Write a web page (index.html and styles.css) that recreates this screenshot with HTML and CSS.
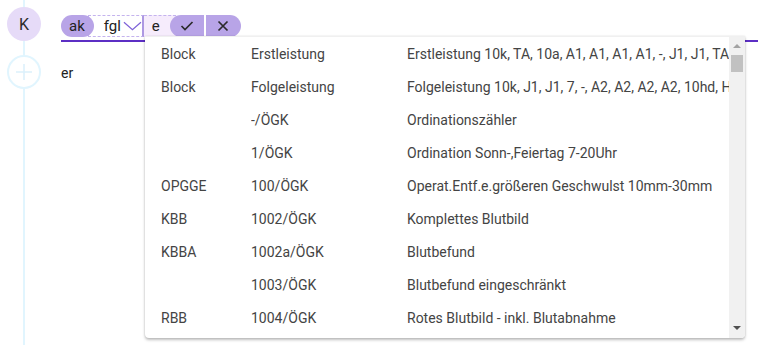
FILE: index.html
```html
<!DOCTYPE html>
<html lang="en">
<head>
  <meta charset="UTF-8">
  <meta name="viewport" content="width=device-width, initial-scale=1.0">
  <title>Leistungen</title>
  <link rel="stylesheet" href="styles.css">
</head>
<body>
  <div class="page">
    <div class="rail">
      <div class="rail-line top"></div>
      <div class="avatar">K</div>
      <div class="rail-line mid"></div>
      <div class="add">
        <svg width="18" height="18" viewBox="0 0 18 18"><path d="M9 1v16M1 9h16" stroke="#dcf1fc" stroke-width="1.6" fill="none"/></svg>
      </div>
      <div class="rail-line rest"></div>
    </div>

    <div class="main">
      <div class="field">
        <div class="chips">
          <span class="chip">ak</span>
          <span class="draft">
            <span class="draft-text">fgl</span>
            <svg class="chevron" width="20" height="10" viewBox="0 0 20 10"><polyline points="1,1 10,9 19,1" fill="none" stroke="#7d62d8" stroke-width="1.3"/></svg>
          </span>
          <span class="input">e</span>
          <button class="act ok">
            <svg width="14" height="12" viewBox="0 0 14 12"><polyline points="1.5,6 5,9.5 12.5,2" fill="none" stroke="#2b2b2b" stroke-width="1.7"/></svg>
          </button>
          <button class="act cancel">
            <svg width="12" height="12" viewBox="0 0 12 12"><path d="M1.5 1.5l9 9M10.5 1.5l-9 9" stroke="#2b2b2b" stroke-width="1.7" fill="none"/></svg>
          </button>
        </div>
      </div>
      <div class="note">er</div>
    </div>
  </div>

  <div class="dropdown">
    <div class="list">
      <div class="row"><span>Block</span><span>Erstleistung</span><span>Erstleistung 10k, TA, 10a, A1, A1, A1, A1, -, J1, J1, TA</span></div>
      <div class="row"><span>Block</span><span>Folgeleistung</span><span>Folgeleistung 10k, J1, J1, 7, -, A2, A2, A2, A2, 10hd, H</span></div>
      <div class="row"><span></span><span>-/ÖGK</span><span>Ordinationszähler</span></div>
      <div class="row"><span></span><span>1/ÖGK</span><span>Ordination Sonn-,Feiertag 7-20Uhr</span></div>
      <div class="row"><span>OPGGE</span><span>100/ÖGK</span><span>Operat.Entf.e.größeren Geschwulst 10mm-30mm</span></div>
      <div class="row"><span>KBB</span><span>1002/ÖGK</span><span>Komplettes Blutbild</span></div>
      <div class="row"><span>KBBA</span><span>1002a/ÖGK</span><span>Blutbefund</span></div>
      <div class="row"><span></span><span>1003/ÖGK</span><span>Blutbefund eingeschränkt</span></div>
      <div class="row"><span>RBB</span><span>1004/ÖGK</span><span>Rotes Blutbild - inkl. Blutabnahme</span></div>
    </div>
    <div class="scrollbar">
      <div class="arrow up"></div>
      <div class="thumb"></div>
      <div class="track"></div>
      <div class="arrow down"></div>
    </div>
  </div>
</body>
</html>
```

FILE: styles.css
```css
* { box-sizing: border-box; margin: 0; padding: 0; }
body {
  font-family: Roboto, "Noto Sans", sans-serif;
  font-size: 14px;
  color: #333;
  background: #fff;
  width: 758px;
  height: 345px;
  overflow: hidden;
  position: relative;
}
.page {
  display: flex;
  height: 345px;
}
.rail {
  width: 48px;
  display: flex;
  flex-direction: column;
  align-items: center;
}
.rail-line {
  width: 2px;
  background: #e1f5fe;
}
.rail-line.top { height: 7px; }
.rail-line.mid { height: 14px; }
.rail-line.rest { flex: 1; }
.avatar {
  width: 34px;
  height: 34px;
  border-radius: 50%;
  background: #e6dbf8;
  display: flex;
  align-items: center;
  justify-content: center;
  font-size: 16px;
  color: #2d2d2d;
}
.add {
  width: 34px;
  height: 34px;
  border-radius: 50%;
  border: 2px solid #e1f5fe;
  display: flex;
  align-items: center;
  justify-content: center;
}
.main {
  flex: 1;
  padding-left: 13px;
}
.field {
  padding-top: 15px;
  height: 42px;
  border-bottom: 2px solid #5c2fc4;
}
.chips {
  display: flex;
  height: 22px;
  align-items: stretch;
}
.chip {
  background: #b8a4e7;
  border-radius: 11px;
  padding: 0 9px 0 8px;
  display: flex;
  align-items: center;
  font-size: 15px;
  color: #222;
  position: relative;
  z-index: 1;
}
.draft {
  margin-left: -6px;
  width: 56px;
  border: 1px dashed #c4b3ee;
  border-right: 2px solid #ad98e2;
  display: flex;
  align-items: center;
  padding-left: 15px;
  font-size: 15px;
  color: #222;
}
.draft-text { margin-right: 2px; }
.chevron { margin-top: -1px; }
.input {
  width: 32px;
  background: #f6ecfc;
  border-top: 1px dashed #c4b3ee;
  border-bottom: 1px dashed #ede2f9;
  display: flex;
  align-items: center;
  padding-left: 8px;
  font-size: 15px;
  color: #222;
  margin-right: -6px;
}
.act {
  border: none;
  background: #b8a4e7;
  height: 22px;
  display: flex;
  align-items: center;
  justify-content: center;
  position: relative;
}
.act.ok {
  width: 34px;
  border-radius: 11px 0 0 11px;
  margin-right: 2px;
}
.act.cancel {
  width: 35px;
  border-radius: 0 11px 11px 0;
}
.note {
  margin-top: 21px;
  line-height: 20px;
  font-size: 14px;
  color: #222;
}
.dropdown {
  position: absolute;
  left: 145px;
  top: 36px;
  width: 600px;
  height: 302px;
  background: #fff;
  border-top: 1px solid #f0f0f0;
  border-radius: 0 0 4px 4px;
  box-shadow: 0 2px 3px rgba(0,0,0,0.25), 0 0 2px rgba(0,0,0,0.12);
  display: flex;
  overflow: hidden;
}
.list {
  flex: 1;
  overflow: hidden;
}
.row {
  display: grid;
  grid-template-columns: 90px 156px 1fr;
  height: 33px;
  align-items: center;
  padding-left: 16px;
  white-space: nowrap;
  color: #444;
  font-size: 14px;
}
.row span { overflow: hidden; }
.scrollbar {
  width: 16px;
  background: #f1f1f1;
  display: flex;
  flex-direction: column;
  align-items: center;
}
.arrow {
  height: 17px;
  width: 16px;
  display: flex;
  align-items: center;
  justify-content: center;
}
.arrow::before {
  content: "";
  border-left: 4px solid transparent;
  border-right: 4px solid transparent;
}
.arrow.up::before { border-bottom: 4px solid #a3a3a3; margin-top: 1px; }
.arrow.down::before { border-top: 4px solid #505050; margin-bottom: 3px; }
.thumb {
  width: 12px;
  height: 17px;
  margin-top: 1px;
  background: #c1c1c1;
}
.track { flex: 1; }
```
